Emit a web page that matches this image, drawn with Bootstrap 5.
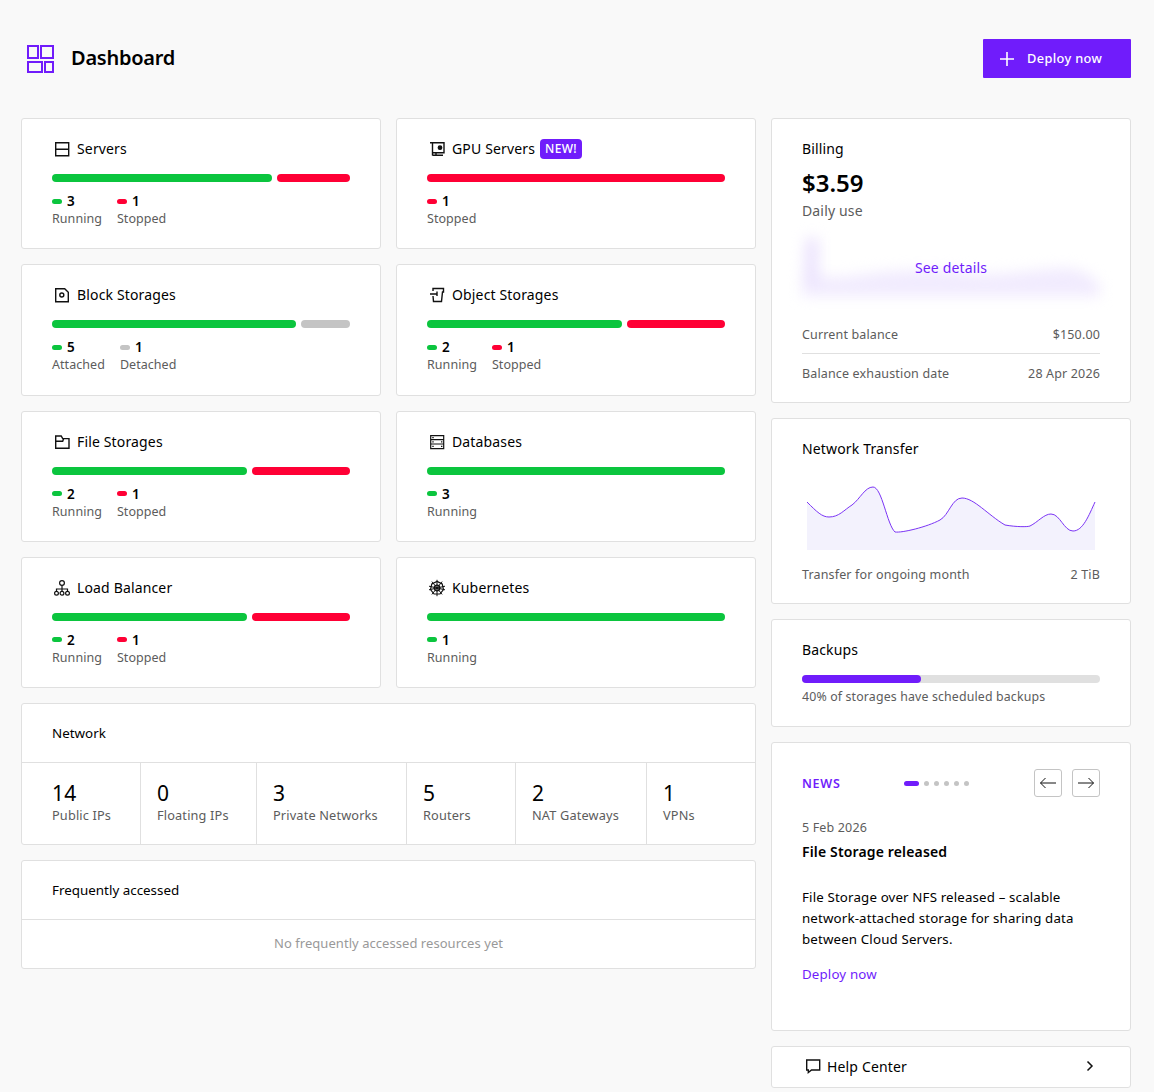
<!DOCTYPE html>
<html lang="en"><head><meta charset="utf-8"><title>Dashboard</title>
<link href="https://cdn.jsdelivr.net/npm/bootstrap@5.3.0/dist/css/bootstrap.min.css" rel="stylesheet">
<style>
body{background:#f9f9f9;font-family:"Noto Sans","Liberation Sans",sans-serif;font-size:14px;color:#000;letter-spacing:.15px}
.page-wrap{padding:39px 23px 0 21px;width:1154px}
.page-head{height:39px;margin-bottom:40px}
.page-title{font-size:20px;font-weight:600;line-height:28px;margin:-2px 0 0 16px;letter-spacing:-.25px}
.deploy-btn{background:#701cfb;color:#fff;width:148px;height:39px;border:0;border-radius:1px;font-size:12.8px;font-weight:500;padding:0 0 0 16px;letter-spacing:.35px}
.deploy-btn:hover{background:#701cfb;color:#fff}
.left-side{width:735px}.right-side{width:360px}
.res-grid{display:grid;grid-template-columns:360px 360px;gap:15px}
.tile{background:#fff;border:1px solid #e0e0e0;border-radius:3px;padding:20px 30px}
.tile-res{height:131.33px}
.tile-title{line-height:20px;font-size:14px;margin:0;font-weight:400}
.tile-title svg{margin-right:5px}
.tag-new{background:#701cfb;color:#fff;font-size:12px;font-weight:500;line-height:20px;height:20px;padding:0 5px;border-radius:4px;margin-left:5px;letter-spacing:.3px}
.seg-bar{height:8px;gap:5px;margin:15px 0 10px}
.seg{height:8px;border-radius:4px}
.c-g{background:#0bc53e}.c-r{background:#ff0035}.c-x{background:#c4c4c4}
.legend{gap:15px}
.legend-num{font-weight:600;font-size:13.5px;line-height:18px}
.sw{width:10px;height:5px;border-radius:3px;margin-right:5px}
.legend-lab{font-size:12.5px;line-height:18.33px;color:#5c5c5c;letter-spacing:.05px}
.muted-row{font-size:12.5px;color:#5c5c5c;line-height:18px}
.amount{font-size:24px;font-weight:600;line-height:30px;margin-top:9px;letter-spacing:0}
.daily{font-size:14px;color:#5c5c5c;line-height:20px;margin-top:3px}
.blur-box{height:96px;margin:5px 0 0}
.blur-box svg{filter:blur(7px);display:block}
.see-link{color:#701cfb;text-decoration:none;top:32px;left:0;right:0;text-align:center;line-height:20px}
.bal-line{border-top:1px solid #e0e0e0;margin-top:9px;padding-top:11px}
.tile-short{padding-bottom:19px}
.trans-svg{display:block;margin:11px 0 16px}
.back-track{height:8px;background:#e0e0e0;border-radius:4px;margin:15px 0 5px}
.back-fill{height:8px;background:#701cfb;border-radius:4px;width:40%}
.back-note{font-size:12.35px;color:#5c5c5c;line-height:18px;margin-bottom:1px}
.tile-news{height:289px;padding-top:26px}
.news-tag{color:#701cfb;font-size:12.5px;font-weight:600;letter-spacing:.7px;width:102px;line-height:20px;padding-top:2px}
.pill-on{width:15px;height:5px;border-radius:3px;background:#701cfb;margin-right:5px}
.pill-dot{width:5px;height:5px;border-radius:50%;background:#c4c4c4;margin-right:4.9px}
.arrow-btn{width:28px;height:28px;border:1px solid #c4c4c4;border-radius:3px;background:#fff;padding:0;display:flex;align-items:center;justify-content:center}
.news-date{font-size:12.5px;color:#5c5c5c;line-height:18px;margin-top:22px}
.news-head{font-size:14px;font-weight:600;line-height:20px;margin:5px 0 25px}
.news-text{font-size:13.3px;line-height:21px;margin:0 0 13px}
.news-link{color:#701cfb;text-decoration:none;font-size:13.3px;line-height:21px}
.tile-help{height:42px;padding:0 35px 2px 32px}
.tile-help svg:first-child{margin-right:5px}
.panel-head{height:59px;padding:0 30px;display:flex;align-items:center;border-bottom:1px solid #e0e0e0;font-size:13.4px;letter-spacing:0}
.panel{background:#fff;border:1px solid #e0e0e0;border-radius:3px}
.net-cell{padding:16px 0 0 16px;height:81px;border-right:1px solid #e0e0e0;width:116px}
.net-cell:nth-child(1){padding-left:30px;width:119px}
.net-cell:nth-child(3){width:150px}
.net-cell:nth-child(4){width:109px}
.net-cell:nth-child(5){width:131px}
.net-cell:last-child{border-right:0;width:108px}
.net-num{font-size:21px;line-height:28px}
.net-lab{font-size:12.75px;color:#5c5c5c;line-height:18px;margin-top:-1px}
.empty-note{height:48px;color:#999;line-height:47px;text-align:center;font-size:13px;letter-spacing:.05px}
svg{flex:none}
</style></head>
<body>
<div class="page-wrap">
 <div class="page-head d-flex align-items-center justify-content-between">
  <div class="d-flex align-items-center">
   <svg class="ms-1" width="30" height="30" viewBox="0 0 30 30" fill="none" stroke="#701cfb" stroke-width="2"><rect x="3" y="2" width="10" height="12"/><rect x="16" y="2" width="12" height="12"/><rect x="3" y="18" width="14" height="10"/><rect x="20" y="18" width="8" height="10"/></svg>
   <h1 class="page-title">Dashboard</h1>
  </div>
  <button class="btn deploy-btn d-flex align-items-center"><svg width="16" height="16" viewBox="0 0 16 16" stroke="#fff" stroke-width="1.6"><path d="M1 8h14M8 1v14"/></svg><span class="ms-2 ps-1">Deploy now</span></button>
 </div>
 <div class="d-flex gap-0 justify-content-between">
  <div class="left-side d-flex flex-column" style="gap:15px">
   <div class="res-grid">
    <div class="tile tile-res">
     <h2 class="tile-title d-flex align-items-center"><svg width="20" height="20" viewBox="0 0 20 20" fill="none" stroke="#111" stroke-width="1.4"><path d="M3.700 3.700h13v13h-13zM3.700 10.200h13"/></svg>Servers</h2>
     <div class="seg-bar d-flex"><div class="seg c-g" style="flex:3"></div><div class="seg c-r" style="flex:1"></div></div>
     <div class="legend d-flex">
      <div><div class="d-flex align-items-center legend-num"><span class="sw c-g"></span>3</div><div class="legend-lab">Running</div></div>
      <div><div class="d-flex align-items-center legend-num"><span class="sw c-r"></span>1</div><div class="legend-lab">Stopped</div></div>
     </div>
    </div>
    <div class="tile tile-res">
     <h2 class="tile-title d-flex align-items-center"><svg width="20" height="20" viewBox="0 0 20 20" fill="none" stroke="#111" stroke-width="1.4"><path d="M3 3.700h14v10H5.500M5.500 3.700v12.800M5.500 16.300h10.500M9 13.700v2.600"/><circle cx="13" cy="8.700" r="1.700" fill="#111"/></svg>GPU Servers<span class="tag-new">NEW!</span></h2>
     <div class="seg-bar d-flex"><div class="seg c-r flex-fill"></div></div>
     <div class="legend d-flex">
      <div><div class="d-flex align-items-center legend-num"><span class="sw c-r"></span>1</div><div class="legend-lab">Stopped</div></div>
     </div>
    </div>
    <div class="tile tile-res">
     <h2 class="tile-title d-flex align-items-center"><svg width="20" height="20" viewBox="0 0 20 20" fill="none" stroke="#111" stroke-width="1.4"><path d="M3.700 3.700h9l3.600 3.600v9.400H3.700z"/><circle cx="9.800" cy="10" r="2"/></svg>Block Storages</h2>
     <div class="seg-bar d-flex"><div class="seg c-g" style="flex:5"></div><div class="seg c-x" style="flex:1"></div></div>
     <div class="legend d-flex">
      <div><div class="d-flex align-items-center legend-num"><span class="sw c-g"></span>5</div><div class="legend-lab">Attached</div></div>
      <div><div class="d-flex align-items-center legend-num"><span class="sw c-x"></span>1</div><div class="legend-lab">Detached</div></div>
     </div>
    </div>
    <div class="tile tile-res">
     <h2 class="tile-title d-flex align-items-center"><svg width="20" height="20" viewBox="0 0 20 20" fill="none" stroke="#111" stroke-width="1.4"><path d="M6 6V3.500h10.500v3.500h-1l-1 9.500H6.500L6 11"/><path d="M3 9h7M10 6.500V11"/></svg>Object Storages</h2>
     <div class="seg-bar d-flex"><div class="seg c-g" style="flex:2"></div><div class="seg c-r" style="flex:1"></div></div>
     <div class="legend d-flex">
      <div><div class="d-flex align-items-center legend-num"><span class="sw c-g"></span>2</div><div class="legend-lab">Running</div></div>
      <div><div class="d-flex align-items-center legend-num"><span class="sw c-r"></span>1</div><div class="legend-lab">Stopped</div></div>
     </div>
    </div>
    <div class="tile tile-res">
     <h2 class="tile-title d-flex align-items-center"><svg width="20" height="20" viewBox="0 0 20 20" fill="none" stroke="#111" stroke-width="1.4"><path d="M3.700 4h5.500l1.500 2.600h6.300v9.600H3.700zM3.700 9.200h7l1-2.600"/></svg>File Storages</h2>
     <div class="seg-bar d-flex"><div class="seg c-g" style="flex:2"></div><div class="seg c-r" style="flex:1"></div></div>
     <div class="legend d-flex">
      <div><div class="d-flex align-items-center legend-num"><span class="sw c-g"></span>2</div><div class="legend-lab">Running</div></div>
      <div><div class="d-flex align-items-center legend-num"><span class="sw c-r"></span>1</div><div class="legend-lab">Stopped</div></div>
     </div>
    </div>
    <div class="tile tile-res">
     <h2 class="tile-title d-flex align-items-center"><svg width="20" height="20" viewBox="0 0 20 20" fill="none" stroke="#111" stroke-width="1.2"><path d="M3.700 3.700h13v13h-13zM3.700 7.700h13M3.700 12h13"/><path d="M5.300 5.700h1.400M5.300 9.800h1.400M5.300 14.300h1.400M14 9.800h1.400M14 14.300h1.400"/></svg>Databases</h2>
     <div class="seg-bar d-flex"><div class="seg c-g flex-fill"></div></div>
     <div class="legend d-flex">
      <div><div class="d-flex align-items-center legend-num"><span class="sw c-g"></span>3</div><div class="legend-lab">Running</div></div>
     </div>
    </div>
    <div class="tile tile-res">
     <h2 class="tile-title d-flex align-items-center"><svg width="20" height="20" viewBox="0 0 20 20" fill="none" stroke="#111" stroke-width="1.2"><circle cx="10" cy="5" r="2.400"/><circle cx="4.500" cy="15.200" r="1.900"/><circle cx="10" cy="15.200" r="1.900"/><circle cx="15.500" cy="15.200" r="1.900"/><path d="M10 7.400v5.900M4.500 13.300v-2.300h11v2.300"/></svg>Load Balancer</h2>
     <div class="seg-bar d-flex"><div class="seg c-g" style="flex:2"></div><div class="seg c-r" style="flex:1"></div></div>
     <div class="legend d-flex">
      <div><div class="d-flex align-items-center legend-num"><span class="sw c-g"></span>2</div><div class="legend-lab">Running</div></div>
      <div><div class="d-flex align-items-center legend-num"><span class="sw c-r"></span>1</div><div class="legend-lab">Stopped</div></div>
     </div>
    </div>
    <div class="tile tile-res">
     <h2 class="tile-title d-flex align-items-center"><svg width="20" height="20" viewBox="0 0 20 20" fill="none" stroke="#111" stroke-width="1.2"><path d="M10 3.400l5.200 2.500 1.300 5.600-3.600 4.500H7.100l-3.600-4.500 1.300-5.600z"/><circle cx="10" cy="10" r="2.800"/><path d="M10 1.800V18.200M2 8.200l16 3.600M18 8.200L2 11.800M4.900 3.600l10.200 12.800M15.100 3.600L4.900 16.400" stroke-width="1"/></svg>Kubernetes</h2>
     <div class="seg-bar d-flex"><div class="seg c-g flex-fill"></div></div>
     <div class="legend d-flex">
      <div><div class="d-flex align-items-center legend-num"><span class="sw c-g"></span>1</div><div class="legend-lab">Running</div></div>
     </div>
    </div>
   </div>
   <div class="panel">
    <h2 class="tile-title panel-head">Network</h2>
    <div class="d-flex">
     <div class="net-cell"><div class="net-num">14</div><div class="net-lab">Public IPs</div></div>
     <div class="net-cell"><div class="net-num">0</div><div class="net-lab">Floating IPs</div></div>
     <div class="net-cell"><div class="net-num">3</div><div class="net-lab">Private Networks</div></div>
     <div class="net-cell"><div class="net-num">5</div><div class="net-lab">Routers</div></div>
     <div class="net-cell"><div class="net-num">2</div><div class="net-lab">NAT Gateways</div></div>
     <div class="net-cell"><div class="net-num">1</div><div class="net-lab">VPNs</div></div>
    </div>
   </div>
   <div class="panel">
    <h2 class="tile-title panel-head">Frequently accessed</h2>
    <div class="empty-note">No frequently accessed resources yet</div>
   </div>
  </div>
  <div class="right-side d-flex flex-column" style="gap:15px">
   <div class="tile tile-short">
    <h2 class="tile-title">Billing</h2>
    <div class="amount">$3.59</div>
    <div class="daily">Daily use</div>
    <div class="blur-box position-relative">
     <svg width="298" height="96" viewBox="0 0 298 96"><path d="M4 14C10 30 10 44 18 50C40 54 60 48 80 46C110 44 140 42 170 48C200 50 230 44 260 42C280 42 290 50 298 60V70H0V60Z" fill="#f1ebfe"/><path d="M10 12V58" stroke="#ebe2fd" stroke-width="13"/></svg>
     <a class="see-link position-absolute" href="#">See details</a>
    </div>
    <div class="d-flex justify-content-between muted-row mt-1"><span>Current balance</span><span>$150.00</span></div>
    <div class="d-flex justify-content-between muted-row bal-line"><span>Balance exhaustion date</span><span>28 Apr 2026</span></div>
   </div>
   <div class="tile tile-short">
    <h2 class="tile-title">Network Transfer</h2>
    <svg class="trans-svg" width="298" height="80" viewBox="0 0 298 80"><path d="M5 32C15 42 20 47 27 47C37 47 42 40 50 35C58 29 63 17 71 17C80 17 85 55 93 62C100 63 125 57 138 50C147 45 150 28 160 28C172 28 186 45 203 55C214 57 226 57 228 56C236 52 242 44 249 44C258 44 262 61 271 61C281 61 287 45 293 32V81H5Z" fill="#f3f2fd"/><path d="M5 32C15 42 20 47 27 47C37 47 42 40 50 35C58 29 63 17 71 17C80 17 85 55 93 62C100 63 125 57 138 50C147 45 150 28 160 28C172 28 186 45 203 55C214 57 226 57 228 56C236 52 242 44 249 44C258 44 262 61 271 61C281 61 287 45 293 32" fill="none" stroke="#7b34f5" stroke-width="1"/></svg>
    <div class="d-flex justify-content-between muted-row"><span>Transfer for ongoing month</span><span>2 TiB</span></div>
   </div>
   <div class="tile tile-short">
    <h2 class="tile-title">Backups</h2>
    <div class="back-track"><div class="back-fill"></div></div>
    <div class="back-note">40% of storages have scheduled backups</div>
   </div>
   <div class="tile tile-news">
    <div class="d-flex align-items-center gap-0">
     <div class="news-tag">NEWS</div>
     <div class="d-flex align-items-center flex-grow-1"><span class="pill-on"></span><span class="pill-dot"></span><span class="pill-dot"></span><span class="pill-dot"></span><span class="pill-dot"></span><span class="pill-dot"></span></div>
     <div class="d-flex" style="gap:10px">
      <button class="arrow-btn" aria-label="Previous"><svg width="18" height="12" viewBox="0 0 18 12" fill="none" stroke="#111" stroke-width="1"><path d="M17 6H1.500M6.500 1L1.500 6l5 5"/></svg></button>
      <button class="arrow-btn" aria-label="Next"><svg width="18" height="12" viewBox="0 0 18 12" fill="none" stroke="#111" stroke-width="1"><path d="M1 6h15.500M11.500 1l5 5-5 5"/></svg></button>
     </div>
    </div>
    <div class="news-date">5 Feb 2026</div>
    <h3 class="news-head">File Storage released</h3>
    <p class="news-text">File Storage over NFS released – scalable<br>network-attached storage for sharing data<br>between Cloud Servers.</p>
    <a class="news-link" href="#">Deploy now</a>
   </div>
   <div class="tile tile-help d-flex align-items-center">
    <svg width="18" height="18" viewBox="0 0 18 18" fill="none" stroke="#111" stroke-width="1.4"><path d="M2.700 3h13v10H7.500L4.300 15.600V13H2.700z"/></svg>
    <span class="flex-grow-1">Help Center</span>
    <svg width="10" height="12" viewBox="0 0 10 12" fill="none" stroke="#111" stroke-width="1.500"><path d="M2.500 1.500L7 6l-4.500 4.500"/></svg>
   </div>
  </div>
 </div>
</div>
<script src="https://cdn.jsdelivr.net/npm/bootstrap@5.3.0/dist/js/bootstrap.bundle.min.js"></script>
</body></html>
